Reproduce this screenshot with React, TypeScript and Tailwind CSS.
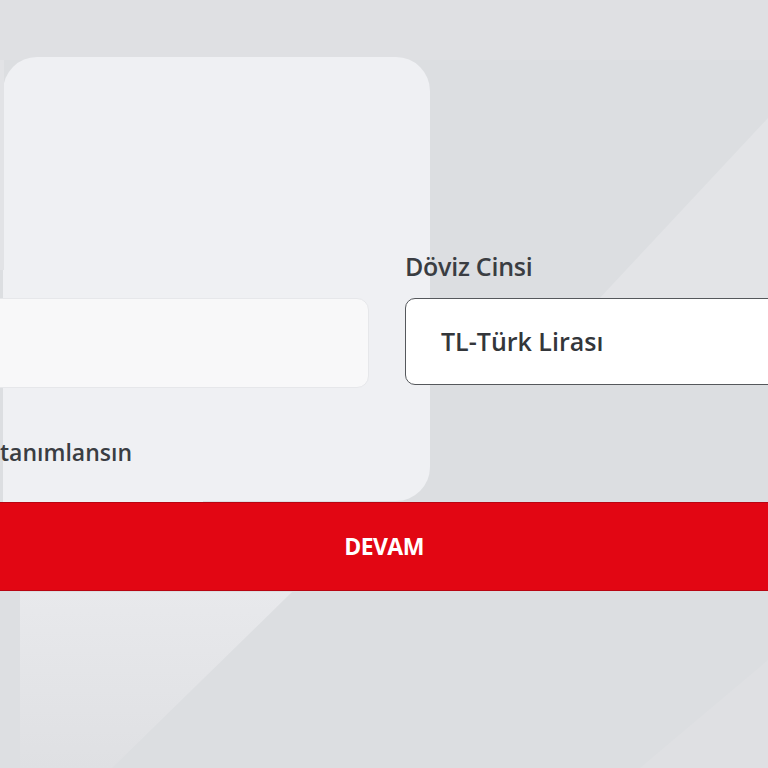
export default function App() {
  return (
    <div className="relative w-[768px] h-[768px] overflow-hidden bg-[#dcdee1] font-['Open_Sans',sans-serif]">
      {/* decorative background */}
      <svg className="absolute inset-0" width="768" height="768" viewBox="0 0 768 768">
        <defs>
          <linearGradient id="fade" x1="0" y1="0" x2="0" y2="1">
            <stop offset="0" stopColor="#e8e9ec" />
            <stop offset="1" stopColor="#dfe0e3" />
          </linearGradient>
        </defs>
        <rect x="0" y="0" width="768" height="60" fill="#dfe0e3" />
        <polygon points="768,118 598,300 768,300" fill="#e3e4e7" />
        <polygon points="20,592 292,592 112,768 20,768" fill="url(#fade)" />
        <rect x="0" y="592" width="20" height="176" fill="#dddfe2" />
        <polygon points="640,768 768,660 768,768" fill="#dfe0e3" />
        <rect x="3" y="57" width="427" height="444" rx="34" fill="#eff0f3" />
        <rect x="3" y="300" width="200" height="210" fill="#eff0f3" />
        <rect x="0" y="60" width="4" height="210" fill="#e2e3e6" />
      </svg>

      <div className="relative pt-[250px]">
        <div className="flex gap-9 -ml-[60px] -mr-[40px]">
          <div className="w-[429px] flex flex-col">
            <div className="h-[32px]" />
            <div className="mt-4 h-[90px] rounded-xl border border-[#e6e7ea] bg-[#f8f8f9]" />
          </div>
          <div className="flex-1 flex flex-col">
            <div className="h-[32px] text-[25px] leading-[32px] font-semibold tracking-[-0.01em] text-[#3a3d42]">
              Döviz Cinsi
            </div>
            <div className="mt-4 h-[87px] rounded-[10px] border border-[#55585c] bg-white flex items-center pl-[35px]">
              <span className="text-[25px] font-semibold text-[#33363a]">TL-Türk Lirası</span>
            </div>
          </div>
        </div>

        <div className="mt-[48px] h-[32px] whitespace-nowrap text-[23px] leading-[32px] font-semibold text-[#3a3d42]">
          tanımlansın
        </div>

        <button className="mt-[34px] w-full h-[89px] bg-[#e20613] border-y border-[#b80512] text-white font-bold text-[23px] tracking-tight">
          DEVAM
        </button>
      </div>
    </div>
  );
}
